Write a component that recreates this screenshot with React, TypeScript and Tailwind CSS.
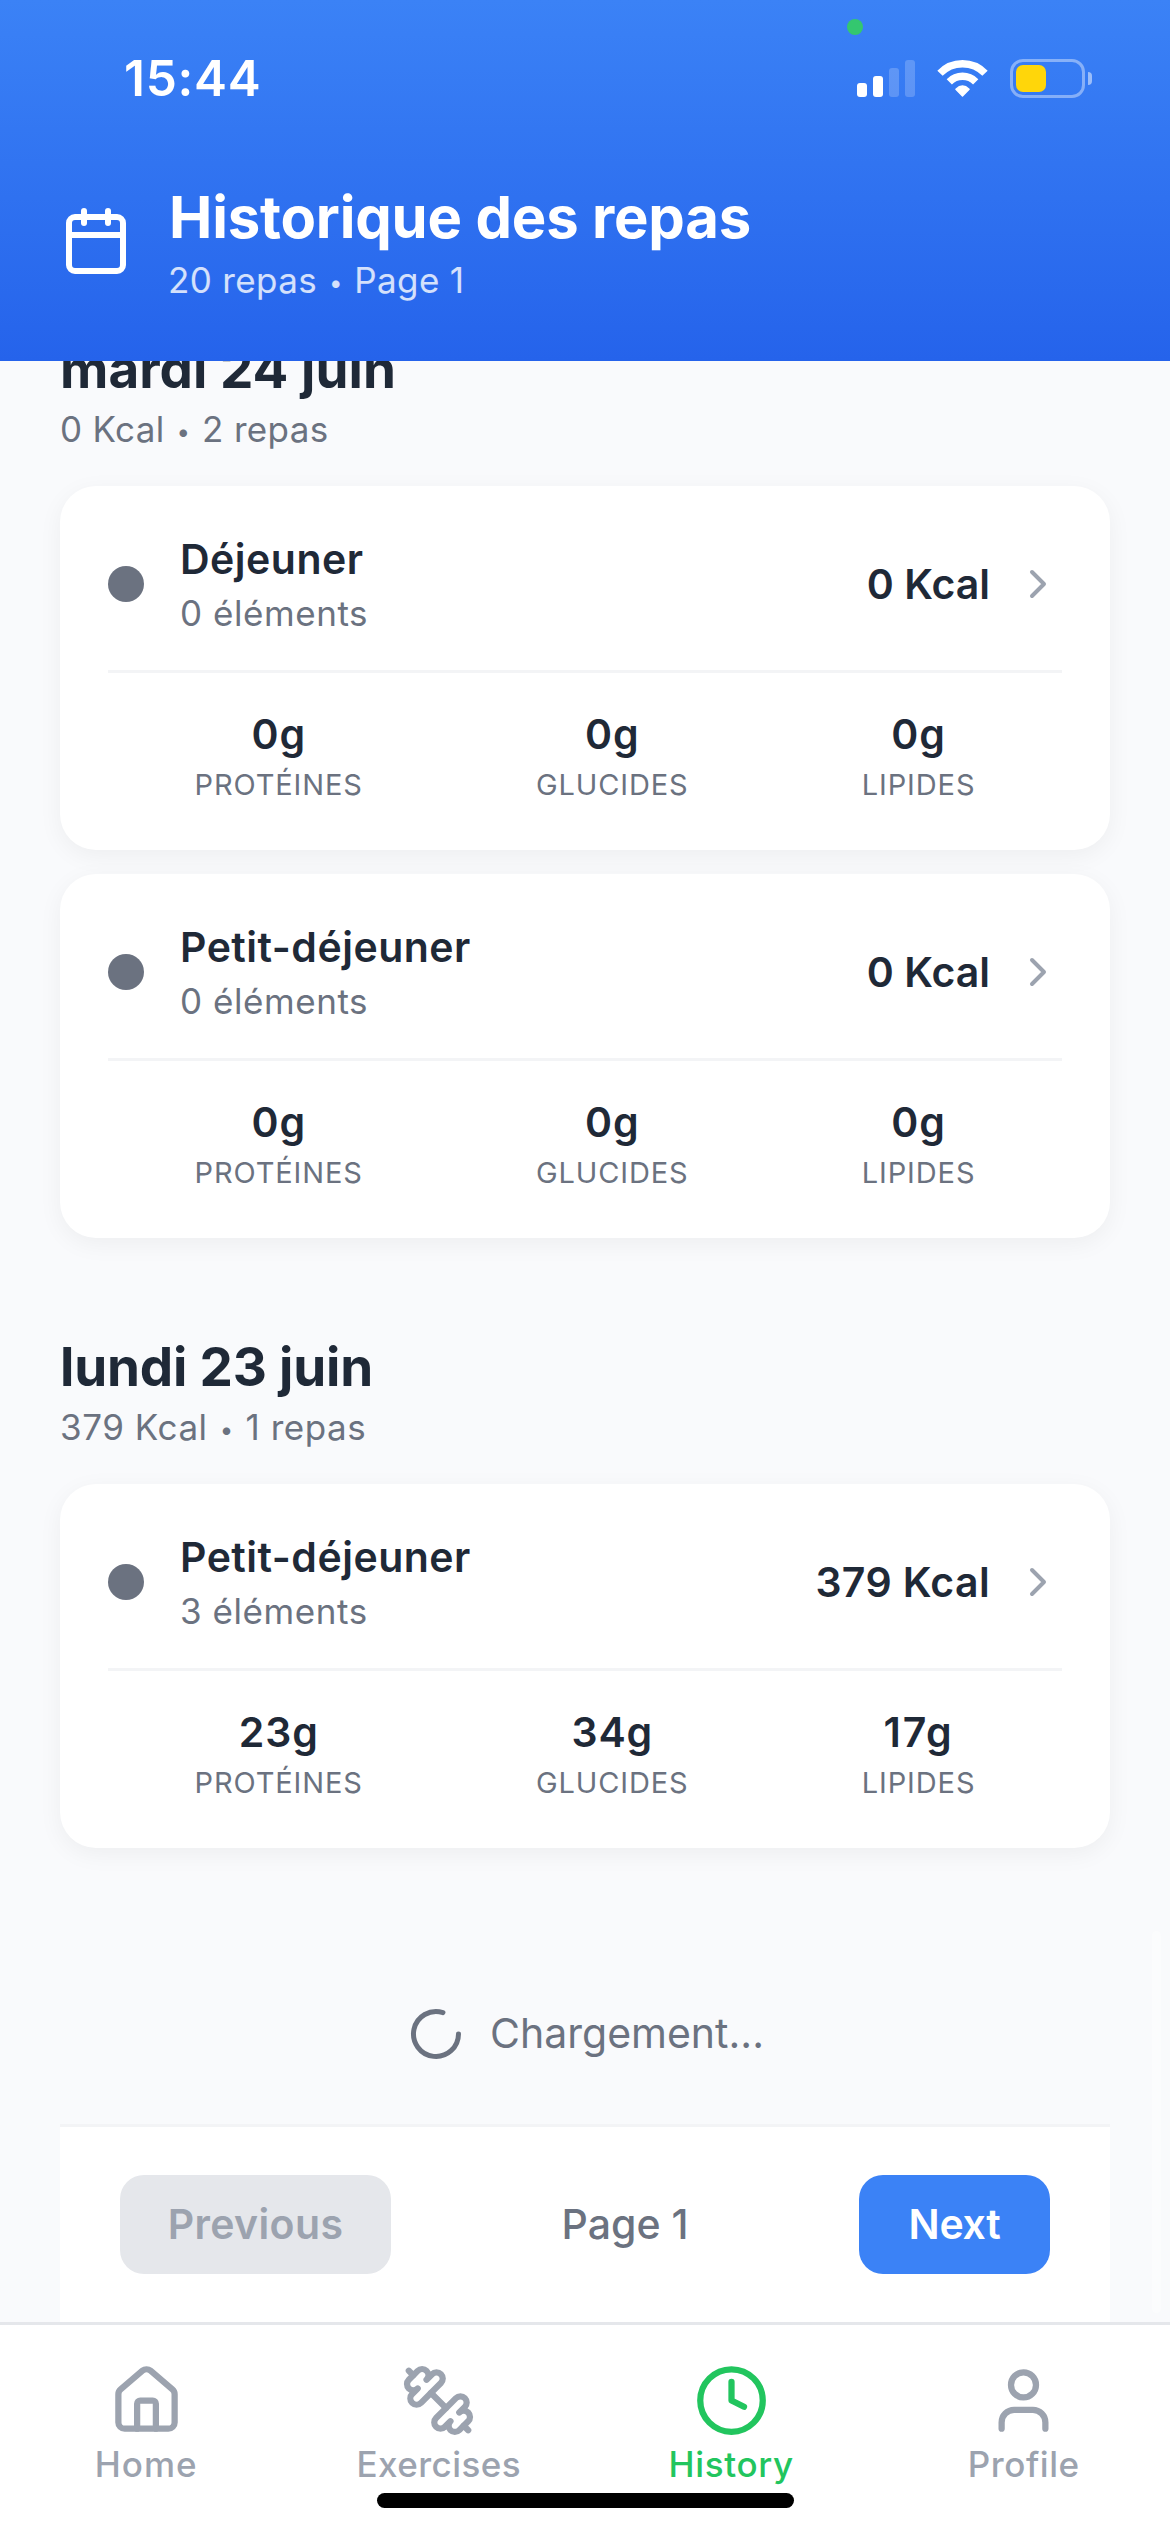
import type { ReactNode } from "react";
import { Calendar, ChevronRight } from "lucide-react";

type Macro = { value: string; label: string; tracking?: string };
type Meal = { name: string; items: string; kcal: string; kcalTracking?: string; macros: Macro[] };
type Day = {
  title: string;
  titleTracking: string;
  total: string;
  count: string;
  summaryTracking: string;
  meals: Meal[];
};

const emptyMacros: Macro[] = [
  { value: "0g", label: "Protéines" },
  { value: "0g", label: "Glucides" },
  { value: "0g", label: "Lipides" },
];

const days: Day[] = [
  {
    title: "mardi 24 juin",
    titleTracking: "tracking-[0.04px]",
    total: "0 Kcal",
    count: "2 repas",
    summaryTracking: "tracking-[0.35px]",
    meals: [
      { name: "Déjeuner", items: "0 éléments", kcal: "0 Kcal", macros: emptyMacros },
      { name: "Petit-déjeuner", items: "0 éléments", kcal: "0 Kcal", macros: emptyMacros },
    ],
  },
  {
    title: "lundi 23 juin",
    titleTracking: "tracking-[-0.19px]",
    total: "379 Kcal",
    count: "1 repas",
    summaryTracking: "tracking-[0.55px]",
    meals: [
      {
        name: "Petit-déjeuner",
        items: "3 éléments",
        kcal: "379 Kcal",
        kcalTracking: "tracking-[0.37px]",
        macros: [
          { value: "23g", label: "Protéines" },
          { value: "34g", label: "Glucides" },
          { value: "17g", label: "Lipides", tracking: "tracking-[1.8px]" },
        ],
      },
    ],
  },
];

function Bullet() {
  return <span className="relative -top-[2px] inline-block w-[17px] text-center text-[24px] leading-none tracking-normal">•</span>;
}

function StatusBar() {
  return (
    <div className="flex h-[156px] items-center justify-between pr-[78px] pl-[124px]">
      <span className="text-[49.5px] leading-[60px] font-semibold tracking-[0.75px] text-white">15:44</span>
      <div className="flex items-center">
        <div className="flex h-[37px] items-end gap-[6px]">
          <div className="h-[14px] w-[10px] rounded-[3px] bg-white" />
          <div className="h-[21px] w-[10px] rounded-[3px] bg-white" />
          <div className="h-[29px] w-[10px] rounded-[3px] bg-white/20" />
          <div className="h-[37px] w-[10px] rounded-[3px] bg-white/20" />
        </div>
        <svg className="ml-[22px] h-[37px] w-[51px]" viewBox="0 0 51 37" fill="none">
          <path d="M3 13.3a31.3 31.3 0 0 1 45 0" stroke="#fff" strokeWidth="7.4" />
          <path d="M12.3 21.8a18.6 18.6 0 0 1 26.4 0" stroke="#fff" strokeWidth="7.4" />
          <path d="M18.9 29.2Q25.5 22.8 32.1 29.2L25.5 36Z" fill="#fff" stroke="#fff" strokeWidth="1.4" strokeLinejoin="round" />
        </svg>
        <div className="ml-[22px] flex h-[39px] w-[75px] items-center rounded-[13px] border-3 border-white/40 px-[3px]">
          <div className="h-[27px] w-[30px] rounded-[7px] bg-[#ffd60a]" />
        </div>
        <div className="ml-[3px] h-[13px] w-[4px] rounded-r-full bg-white/50" />
      </div>
    </div>
  );
}

function Header() {
  return (
    <header className="relative z-10 h-[361px] shrink-0 bg-linear-to-b/srgb from-[#3b82f6] to-[#2563eb]">
      <div className="absolute top-[19px] left-[847px] size-4 rounded-full bg-[#34c76f]" />
      <StatusBar />
      <div className="flex items-start gap-9 px-[60px] pt-[25px]">
        <Calendar className="mt-6 size-[72px] text-white" strokeWidth={2} />
        <div>
          <h1 className="pl-px text-[58px] leading-[72px] font-bold tracking-[-0.19px] text-white">Historique des repas</h1>
          <p className="mt-[5px] text-[35px] leading-[44px] tracking-[0.35px] text-white/80">
            20 repas <Bullet /> Page 1
          </p>
        </div>
      </div>
    </header>
  );
}

function MealCard({ meal }: { meal: Meal }) {
  return (
    <div className="rounded-[36px] bg-white p-12 shadow-[0_6px_24px_rgba(0,0,0,0.05)]">
      <div className="flex h-[100px] items-center">
        <div className="size-9 rounded-full bg-[#6b7280]" />
        <div className="-mb-px ml-9 flex-1">
          <h3 className="text-[41px] leading-[50px] font-semibold tracking-[0.49px] text-[#1f2937]">{meal.name}</h3>
          <p className="mt-[7px] text-[35px] leading-[44px] tracking-[0.56px] text-[#6b7280]">{meal.items}</p>
        </div>
        <span className={`text-[41px] leading-[50px] font-semibold text-[#1f2937] ${meal.kcalTracking ?? "tracking-normal"}`}>
          {meal.kcal}
        </span>
        <ChevronRight className="ml-6 size-12 text-[#9ca3af]" strokeWidth={2} />
      </div>
      <div className="mt-9 flex justify-around border-t-3 border-[#f3f4f6] pt-9">
        {meal.macros.map((m) => (
          <div key={m.label} className="flex flex-col items-center">
            <span className={`text-[41px] leading-[50px] font-semibold text-[#1f2937] ${m.tracking ?? "tracking-[0.9px]"}`}>
              {m.value}
            </span>
            <span className="mt-2 text-[29px] leading-[35px] tracking-[0.88px] text-[#6b7280] uppercase">{m.label}</span>
          </div>
        ))}
      </div>
    </div>
  );
}

function DaySection({ day }: { day: Day }) {
  return (
    <section className="pb-[97px]">
      <h2 className={`text-[53px] leading-[64px] font-bold text-[#1f2937] ${day.titleTracking}`}>{day.title}</h2>
      <p className={`mt-[6px] mb-[35px] text-[35px] leading-[44px] text-[#6b7280] ${day.summaryTracking}`}>
        {day.total} <Bullet /> {day.count}
      </p>
      <div className="flex flex-col gap-6">
        {day.meals.map((meal) => (
          <MealCard key={meal.name} meal={meal} />
        ))}
      </div>
    </section>
  );
}

function LoadingRow() {
  return (
    <div className="mt-[59px] flex h-[60px] items-center justify-center gap-6 text-[#6b7280]">
      <svg className="size-[60px]" viewBox="0 0 24 24" fill="none" stroke="currentColor" strokeWidth="2" strokeLinecap="round">
        <path d="M21 12a9 9 0 1 1-6.219-8.56" />
      </svg>
      <span className="mb-[2px] text-[41px] leading-[50px]">Chargement...</span>
    </div>
  );
}

function Pagination() {
  return (
    <div className="mt-[60px] flex h-[198px] items-center justify-between border-t-3 border-[#f3f4f6] bg-white px-[60px] text-[41px] leading-[50px]">
      <button className="h-[99px] w-[271px] rounded-3xl bg-[#e5e7eb] pb-px font-semibold tracking-[0.38px] text-[#9ca3af]">
        Previous
      </button>
      <span className="pb-px font-medium text-[#6b7280]">Page 1</span>
      <button className="h-[99px] w-[191px] rounded-3xl bg-[#3b82f6] pb-px font-semibold tracking-[-0.3px] text-white">
        Next
      </button>
    </div>
  );
}

function TabIcon({ children }: { children: ReactNode }) {
  return (
    <svg
      className="size-[75px]"
      viewBox="0 0 24 24"
      fill="none"
      stroke="currentColor"
      strokeWidth="2"
      strokeLinecap="round"
      strokeLinejoin="round"
    >
      {children}
    </svg>
  );
}

const tabs: { label: string; color: string; tracking: string; icon: ReactNode }[] = [
  {
    label: "Home",
    color: "text-[#9ca3af]",
    tracking: "tracking-[1px]",
    icon: (
      <>
        <path d="M15 21v-8a1 1 0 0 0-1-1h-4a1 1 0 0 0-1 1v8" />
        <path d="M3 10a2 2 0 0 1 .709-1.528l7-5.999a2 2 0 0 1 2.582 0l7 5.999A2 2 0 0 1 21 10v9a2 2 0 0 1-2 2H5a2 2 0 0 1-2-2z" />
      </>
    ),
  },
  {
    label: "Exercises",
    color: "text-[#9ca3af]",
    tracking: "tracking-[0.42px]",
    icon: (
      <>
        <path d="M14.4 14.4 9.6 9.6" />
        <path d="M18.657 21.485a2 2 0 1 1-2.829-2.828l-1.767 1.768a2 2 0 1 1-2.829-2.829l6.364-6.364a2 2 0 1 1 2.829 2.829l-1.768 1.767a2 2 0 1 1 2.828 2.829z" />
        <path d="m21.5 21.5-1.4-1.4" />
        <path d="M3.9 3.9 2.5 2.5" />
        <path d="M6.404 12.768a2 2 0 1 1-2.829-2.829l1.768-1.767a2 2 0 1 1-2.828-2.829l2.828-2.828a2 2 0 1 1 2.829 2.828l1.767-1.768a2 2 0 1 1 2.829 2.829z" />
      </>
    ),
  },
  {
    label: "History",
    color: "text-[#22c55e]",
    tracking: "tracking-[0.66px]",
    icon: (
      <>
        <circle cx="12" cy="12" r="10" />
        <path d="M12 6v6l4 2" />
      </>
    ),
  },
  {
    label: "Profile",
    color: "text-[#9ca3af]",
    tracking: "tracking-[0.55px]",
    icon: (
      <>
        <path d="M19 21v-2a4 4 0 0 0-4-4H9a4 4 0 0 0-4 4v2" />
        <circle cx="12" cy="7" r="4" />
      </>
    ),
  },
];

function TabBar() {
  return (
    <nav className="relative grid h-[210px] shrink-0 grid-cols-4 border-t-3 border-[#e5e7eb] bg-white pt-[38px]">
      {tabs.map((tab) => (
        <div key={tab.label} className={`flex flex-col items-center ${tab.color}`}>
          <TabIcon>{tab.icon}</TabIcon>
          <span className={`mt-1 text-[35px] leading-[44px] font-medium ${tab.tracking}`}>{tab.label}</span>
        </div>
      ))}
      <div className="absolute bottom-6 left-[377px] h-[15px] w-[417px] rounded-full bg-black" />
    </nav>
  );
}

export default function App() {
  return (
    <div className="flex h-[2532px] w-[1170px] flex-col overflow-hidden bg-[#f9fafc] font-['Inter',sans-serif]">
      <Header />
      <main className="relative min-h-0 flex-1 overflow-hidden px-[60px]">
        <div className="-mt-6">
          {days.map((day) => (
            <DaySection key={day.title} day={day} />
          ))}
          <LoadingRow />
          <Pagination />
        </div>
        <div className="absolute right-[9px] bottom-[9px] h-[382px] w-[9px] rounded-full bg-white/40" />
      </main>
      <TabBar />
    </div>
  );
}
